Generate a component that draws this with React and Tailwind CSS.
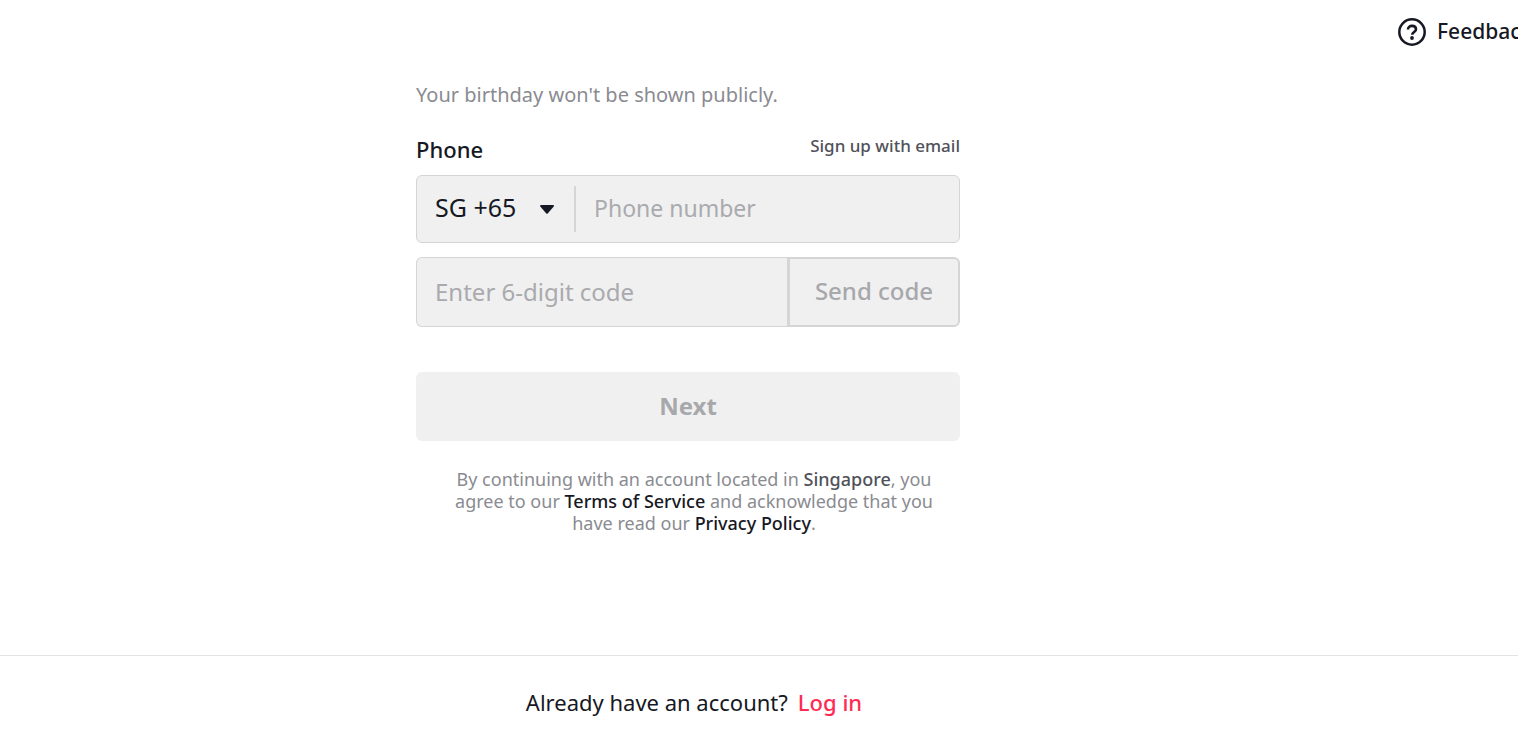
import React from "react";

function FeedbackIcon() {
  return (
    <svg className="size-7 shrink-0" viewBox="0 0 28 28" fill="none" aria-hidden="true">
      <circle cx="14" cy="14" r="12.7" stroke="#161823" strokeWidth="2.5" />
      <path d="M10 11.6c0-2.3 1.7-3.7 4-3.7s4 1.3 4 3.4c0 2.6-3.7 2.7-3.8 5.4" stroke="#161823" strokeWidth="2.6" />
      <circle cx="14" cy="20" r="1.9" fill="#161823" />
    </svg>
  );
}

export default function App() {
  return (
    <div className="flex min-h-screen flex-col overflow-hidden bg-white font-['Noto_Sans',sans-serif] text-[#161823]">
      <header className="flex h-16 shrink-0 items-center justify-end">
        <a href="#feedback" className="flex w-[120px] items-center gap-[11px] text-[21px] font-medium whitespace-nowrap">
          <FeedbackIcon />
          Feedback and help
        </a>
      </header>

      <main className="flex flex-1 justify-center pt-[17px] pr-[142px]">
        <form className="w-full max-w-[544px]" onSubmit={(e) => e.preventDefault()}>
          <p className="text-[20px] leading-7 text-[#8a8b91]">Your birthday won't be shown publicly.</p>

          <div className="mt-[22px] flex h-9 items-start justify-between">
            <label htmlFor="phone" className="text-[22px] leading-9 font-medium">Phone</label>
            <a href="#email" className="text-[17px] leading-[30px] font-medium text-[#50525a]">Sign up with email</a>
          </div>

          <div className="mt-2 flex h-[68px] items-center rounded-md border border-[#d5d5d6] bg-[#f0f0f0]">
            <div className="relative flex h-[46px] w-[159px] shrink-0 items-center border-r-2 border-[#d5d5d6]">
              <select aria-label="Country code" className="h-full w-full appearance-none bg-transparent pb-0.5 pl-[18px] text-[25px] outline-none">
                <option>SG +65</option>
              </select>
              <svg className="pointer-events-none absolute top-[19px] right-5 h-[9px] w-[14px]" viewBox="0 0 14 9" aria-hidden="true">
                <path d="M1 0h12c.8 0 1.2.9.7 1.5L7.7 8.5a1 1 0 0 1-1.4 0L.3 1.5C-.2.9.2 0 1 0Z" fill="#161823" />
              </svg>
            </div>
            <input id="phone" type="tel" placeholder="Phone number" className="h-full min-w-0 flex-1 bg-transparent pb-0.5 pl-[18px] text-[23px] outline-none placeholder:text-[#a9aaae]" />
          </div>

          <div className="mt-[14px] flex h-[70px]">
            <input type="text" aria-label="Verification code" placeholder="Enter 6-digit code" className="min-w-0 flex-1 rounded-l-md border border-r-0 border-[#d5d5d6] bg-[#f0f0f0] pl-[18px] text-[24px] outline-none placeholder:text-[#a9aaae]" />
            <button type="button" className="w-[173px] shrink-0 rounded-r-md border-2 border-l-3 border-[#d5d5d6] bg-[#f0f0f0] pb-0.5 text-[24px] font-medium text-[#a7a8ac]">Send code</button>
          </div>

          <button type="submit" className="mt-[45px] h-[69px] w-full rounded-md bg-[#f0f0f0] pb-0.5 text-[24px] font-bold text-[#a7a8ac]">Next</button>

          <p className="mt-[27px] pl-3 text-center text-[18px] leading-[22px] text-[#8a8b91]">
            By continuing with an account located in <span className="font-medium text-[#50525a]">Singapore</span>, you
            <br />
            agree to our <a href="#terms" className="font-medium text-[#161823]">Terms of Service</a> and acknowledge that you
            <br />
            have read our <a href="#privacy" className="font-medium text-[#161823]">Privacy Policy</a>.
          </p>
        </form>
      </main>

      <footer className="flex h-[84px] shrink-0 items-center justify-center gap-[10px] border-t border-[#e3e3e4] pt-[10px] pr-[130px] text-[22px]">
        <span>Already have an account?</span>
        <a href="#login" className="font-medium text-[#fe2c55]">Log in</a>
      </footer>
    </div>
  );
}
